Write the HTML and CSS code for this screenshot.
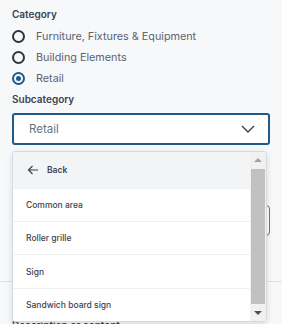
FILE: index.html
```html
<!DOCTYPE html>
<html>
<head>
<meta charset="utf-8">
<link rel="stylesheet" href="styles.css">
</head>
<body>
<div class="page">
  <div class="label">Category</div>
  <div class="radios">
    <label class="radio"><span class="dot"></span><span class="rtext">Furniture, Fixtures &amp; Equipment</span></label>
    <label class="radio"><span class="dot"></span><span class="rtext">Building Elements</span></label>
    <label class="radio"><span class="dot checked"></span><span class="rtext">Retail</span></label>
  </div>
  <div class="label sub">Subcategory</div>
  <div class="select">
    <span class="value">Retail</span>
    <svg class="chev" width="14" height="8" viewBox="0 0 14 8"><path d="M1 1l6 6 6-6" fill="none" stroke="#3b4250" stroke-width="1.4"/></svg>
  </div>
  <div class="field"></div>
  <div class="divider"></div>
  <div class="label desc">Description or content</div>

  <div class="menu">
    <div class="items">
      <div class="back">
        <svg width="12" height="10" viewBox="0 0 12 10"><path d="M11 5H1.5M5.5 1L1.5 5l4 4" fill="none" stroke="#3b4250" stroke-width="1.2"/></svg>
        <span>Back</span>
      </div>
      <div class="item">Common area</div>
      <div class="item">Roller grille</div>
      <div class="item">Sign</div>
      <div class="item last">Sandwich board sign</div>
    </div>
    <div class="scrollbar">
      <div class="arrow up"></div>
      <div class="thumb"></div>
      <div class="arrow down"></div>
    </div>
  </div>
</div>
</body>
</html>
```
FILE: styles.css
```css
* { box-sizing: border-box; }
html, body { margin: 0; padding: 0; }
body {
  background: #f7f8fa;
  font-family: Inter, "Noto Sans", sans-serif;
  width: 282px;
  height: 324px;
  overflow: hidden;
}
.page {
  position: relative;
  padding: 7px 12px 0 12px;
}
.label {
  font-size: 10px;
  font-weight: 600;
  color: #3c4350;
  line-height: 14px;
}
.radios {
  display: flex;
  flex-direction: column;
  margin-top: 5px;
}
.radio {
  display: flex;
  align-items: center;
  height: 21px;
  gap: 11px;
}
.dot {
  width: 13px;
  height: 13px;
  border: 2px solid #2d3440;
  border-radius: 50%;
  display: flex;
  align-items: center;
  justify-content: center;
  flex: none;
}
.dot.checked { border-color: #1f5a8a; }
.dot.checked::after {
  content: "";
  width: 5px;
  height: 5px;
  border-radius: 50%;
  background: #1f5a8a;
}
.rtext {
  font-size: 10.8px;
  color: #5b6370;
}
.sub { margin-top: 3px; }
.select {
  margin-top: 7px;
  height: 32px;
  border: 2px solid #1f5a8a;
  border-radius: 3px;
  background: #fff;
  display: flex;
  align-items: center;
  justify-content: space-between;
  padding: 0 13px 0 15px;
}
.value { font-size: 11.5px; color: #6b7280; }
.field {
  margin-top: 60px;
  height: 31px;
  border: 1.5px solid #6b7280;
  border-radius: 4px;
  background: #fff;
}
.divider {
  margin: 45px -12px 0;
  border-top: 1px solid #dde0e5;
}
.desc { margin-top: 36px; }
.menu {
  position: absolute;
  left: 12px;
  top: 151px;
  width: 255px;
  height: 171px;
  background: #fff;
  border: 1px solid #d7dade;
  border-radius: 3px;
  box-shadow: 0 2px 6px rgba(0,0,0,0.12);
  display: flex;
  overflow: hidden;
}
.items { flex: 1; display: flex; flex-direction: column; }
.back {
  height: 36px;
  background: #f3f4f6;
  display: flex;
  align-items: center;
  gap: 8px;
  padding-left: 14px;
  font-size: 8.5px;
  font-weight: 600;
  color: #3c4350;
}
.item {
  height: 33.5px;
  display: flex;
  align-items: center;
  padding-left: 13px;
  font-size: 8.5px;
  font-weight: 500;
  color: #3c4350;
  border-top: 1px solid #eef0f2;
}
.scrollbar {
  width: 16px;
  background: #f1f1f1;
  display: flex;
  flex-direction: column;
}
.arrow { height: 17px; position: relative; }
.arrow::after {
  content: "";
  position: absolute;
  left: 4px;
  top: 6px;
  border-left: 4px solid transparent;
  border-right: 4px solid transparent;
}
.arrow.up::after { border-bottom: 4px solid #a3a3a3; }
.arrow.down::after { border-top: 4px solid #505050; top: 7px; }
.thumb { flex: 1; background: #c1c1c1; margin: 0 1px; }
```
